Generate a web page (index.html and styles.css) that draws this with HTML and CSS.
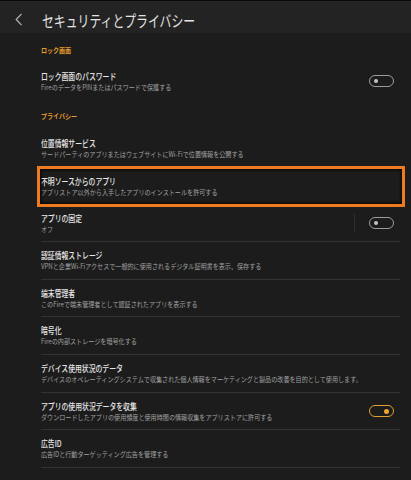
FILE: index.html
```html
<!DOCTYPE html>
<html lang="ja">
<head>
<meta charset="utf-8">
<link rel="stylesheet" href="styles.css">
</head>
<body>
<div class="header">
  <svg class="back" width="8" height="13" viewBox="0 0 8 13"><path d="M6.5 0.8 L1.2 6.5 L6.5 12.2" fill="none" stroke="#b5b5b5" stroke-width="1.2"/></svg>
  <div class="htitle">セキュリティとプライバシー</div>
</div>
<div class="content">
  <div class="section sec1"><span class="label">ロック画面</span></div>
  <div class="row">
    <div class="text"><span class="t">ロック画面のパスワード</span><span class="s">FireのデータをPINまたはパスワードで保護する</span></div>
    <span class="toggle"></span>
  </div>
  <div class="section sec2"><span class="label">プライバシー</span></div>
  <div class="row">
    <div class="text"><span class="t">位置情報サービス</span><span class="s">サードパーティのアプリまたはウェブサイトにWi-Fiで位置情報を公開する</span></div>
  </div>
  <div class="row highlight">
    <div class="text"><span class="t">不明ソースからのアプリ</span><span class="s">アプリストア以外から入手したアプリのインストールを許可する</span></div>
  </div>
  <div class="row first-line">
    <div class="text"><span class="t">アプリの固定</span><span class="s">オフ</span></div>
    <span class="vdiv"></span>
    <span class="toggle"></span>
  </div>
  <div class="row lined">
    <div class="text"><span class="t">認証情報ストレージ</span><span class="s">VPNと企業Wi-Fiアクセスで一般的に使用されるデジタル証明書を表示、保存する</span></div>
  </div>
  <div class="row lined">
    <div class="text"><span class="t">端末管理者</span><span class="s">このFireで端末管理者として認証されたアプリを表示する</span></div>
  </div>
  <div class="row lined">
    <div class="text"><span class="t">暗号化</span><span class="s">Fireの内部ストレージを暗号化する</span></div>
  </div>
  <div class="row lined">
    <div class="text"><span class="t">デバイス使用状況のデータ</span><span class="s">デバイスのオペレーティングシステムで収集された個人情報をマーケティングと製品の改善を目的として使用します。</span></div>
  </div>
  <div class="row lined">
    <div class="text"><span class="t">アプリの使用状況データを収集</span><span class="s">ダウンロードしたアプリの使用頻度と使用時間の情報収集をアプリストアに許可する</span></div>
    <span class="toggle on"></span>
  </div>
  <div class="row lined">
    <div class="text"><span class="t">広告ID</span><span class="s">広告IDと行動ターゲッティング広告を管理する</span></div>
  </div>
</div>
</body>
</html>
```
FILE: styles.css
```css
html, body {
  margin: 0;
  padding: 0;
  background: #1c1c1c;
  font-family: "Noto Sans CJK JP", "Noto Sans", sans-serif;
  overflow: hidden;
}
.header {
  height: 32px;
  border-top: 1px solid #0a0a0a;
  background: #232323;
  display: flex;
  align-items: center;
}
.back {
  margin-left: 15px;
  margin-top: 4px;
  flex: none;
}
.htitle {
  margin-left: 19px;
  margin-top: 5px;
  font-size: 15.6px;
  line-height: 18px;
  color: #e4e4e4;
  white-space: nowrap;
  transform: scaleX(0.76);
  transform-origin: left center;
}
.content {
  padding: 0 11px 0 41px;
}
.section {
  height: 9px;
  display: flex;
  align-items: center;
}
.sec1 { padding: 13px 0 7px; }
.sec2 { padding: 11.5px 0 8.5px; }
.label {
  font-size: 7px;
  line-height: 9px;
  font-weight: 700;
  color: #e49b2c;
  white-space: nowrap;
  transform: scaleX(0.86);
  transform-origin: left center;
}
.row {
  height: 38px;
  display: flex;
  align-items: center;
  position: relative;
}
.first-line {
  height: 36px;
  border-bottom: 1px solid #333333;
}
.lined {
  height: 36.7px;
  border-bottom: 1px solid #333333;
}
.text {
  flex: 1;
  display: flex;
  flex-direction: column;
  min-width: 0;
}
.t {
  font-size: 9px;
  line-height: 11px;
  font-weight: 500;
  color: #e8e8e8;
  white-space: nowrap;
  transform: scaleX(0.76);
  transform-origin: left center;
}
.s {
  font-size: 7px;
  line-height: 10px;
  color: #a0a0a0;
  white-space: nowrap;
  transform: scaleX(0.87);
  transform-origin: left center;
}
.toggle {
  flex: none;
  width: 23px;
  height: 10px;
  border: 1.5px solid #9c9c9c;
  border-radius: 7px;
  margin-right: 6px;
  position: relative;
}
.toggle::after {
  content: "";
  position: absolute;
  left: 4px;
  top: 3px;
  width: 4px;
  height: 4px;
  border-radius: 50%;
  background: #c4c4c4;
}
.toggle.on {
  border-color: #e2a02e;
}
.toggle.on::after {
  left: auto;
  right: 4px;
  top: 2.5px;
  width: 5px;
  height: 5px;
  background: #f2a332;
}
.vdiv {
  flex: none;
  width: 1px;
  height: 19px;
  background: #2e2e2e;
  margin-right: 14px;
}
.highlight::after {
  content: "";
  position: absolute;
  top: -1px;
  bottom: -2px;
  left: -4px;
  right: -5px;
  border: 3px solid #ee7a21;
  box-shadow: inset 0 0 3px 1px #0a0502;
}
```
